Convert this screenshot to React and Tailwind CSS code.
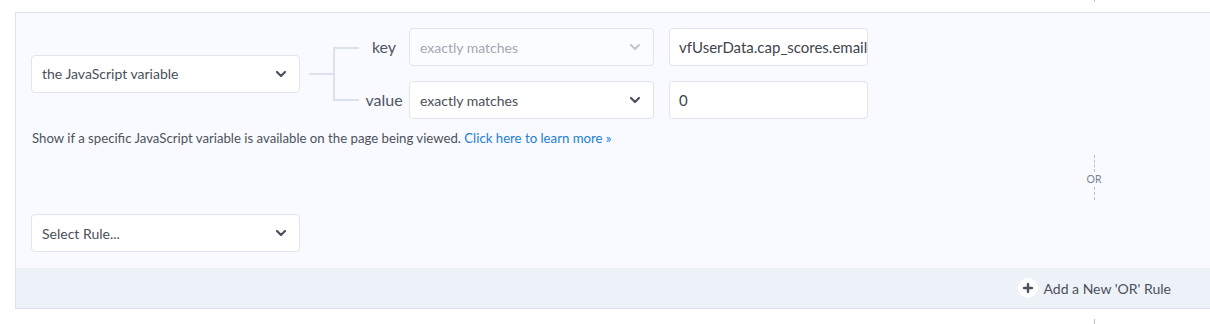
import React from 'react';

const FONT = { fontFamily: 'Lato, "Open Sans", sans-serif' };

function Chevron({ muted }) {
  return (
    <svg width="12" height="8" viewBox="0 0 12 8" className="shrink-0">
      <path
        d="M2 2 L6 6 L10 2"
        fill="none"
        stroke={muted ? '#c4c8d0' : '#4b505a'}
        strokeWidth="2.2"
        strokeLinecap="round"
        strokeLinejoin="round"
      />
    </svg>
  );
}

function Select({ label, width, muted }) {
  return (
    <div
      className={`flex items-center justify-between h-[38px] pl-[10px] pr-[12px] rounded-[4px] border border-[#dfe4ee] text-[14px] ${
        muted ? 'bg-[#fbfcfe] text-[#a3a8b1]' : 'bg-white text-[#4b505a]'
      } ${width}`}
    >
      <span>{label}</span>
      <Chevron muted={muted} />
    </div>
  );
}

function Input({ value }) {
  return (
    <div className="flex items-center h-[38px] w-[199px] px-[9px] rounded-[4px] border border-[#dfe4ee] bg-white text-[15px] text-[#3f444d]">
      {value}
    </div>
  );
}

function Connector() {
  // branches from the first select out to the key / value rows
  return (
    <svg width="59" height="90" viewBox="0 0 59 90" className="shrink-0">
      <g stroke="#dbe2ee" strokeWidth="2" fill="none">
        <path d="M9 45 H34" />
        <path d="M34 18 V72" />
        <path d="M34 19 H59" />
        <path d="M34 71 H59" />
      </g>
    </svg>
  );
}

export default function App() {
  return (
    <div className="w-[1210px] h-[324px] overflow-hidden bg-white" style={FONT}>
      {/* tail of the connector from the block above */}
      <div className="h-[12px] flex">
        <div className="ml-[1094px] w-0 h-[2px] border-l border-dashed border-[#b9bfca]" />
      </div>

      <div className="ml-[15px] border-l border-t border-b border-[#dde3ee] bg-[#f8faff]">
        <div className="px-[15px] pt-[15px] pb-[16px]">
          <div className="flex items-center">
            <Select label="the JavaScript variable" width="w-[269px]" />
            <Connector />
            <div className="flex flex-col gap-[15px]">
              <div className="flex items-center">
                <span className="w-[50px] text-center text-[16px] text-[#50555f]">key</span>
                <Select label="exactly matches" width="w-[245px]" muted />
                <div className="ml-[15px]">
                  <Input value="vfUserData.cap_scores.email" />
                </div>
              </div>
              <div className="flex items-center">
                <span className="w-[50px] text-center text-[16px] text-[#50555f]">value</span>
                <Select label="exactly matches" width="w-[245px]" />
                <div className="ml-[15px]">
                  <Input value="0" />
                </div>
              </div>
            </div>
          </div>

          <p className="mt-[11px] ml-[1px] text-[13.2px] leading-[16px] text-[#4d525b]">
            Show if a specific JavaScript variable is available on the page being viewed.{' '}
            <a className="text-[#1d7fd3]">Click here to learn more »</a>
          </p>

          <div className="mt-[9px] flex flex-col items-center w-[30px] ml-[1048px]">
            <div className="h-[17px] w-0 border-l border-dashed border-[#b9bfca]" />
            <span className="h-[14px] leading-[14px] text-[10.5px] text-[#7b818c]">OR</span>
            <div className="mt-[1px] h-[13px] w-0 border-l border-dashed border-[#b9bfca]" />
          </div>

          <div className="mt-[14px]">
            <Select label="Select Rule..." width="w-[269px]" />
          </div>
        </div>

        <div className="h-[40px] bg-[#edf1f8] flex items-center justify-end pr-[39px]">
          <button className="flex items-center gap-[6px] text-[14px] text-[#4b505a]">
            <span className="w-[20px] h-[20px] rounded-full bg-white flex items-center justify-center">
              <svg width="10" height="10" viewBox="0 0 10 10">
                <path d="M5 1 V9 M1 5 H9" stroke="#4b505a" strokeWidth="2.4" strokeLinecap="round" />
              </svg>
            </span>
            Add a New 'OR' Rule
          </button>
        </div>
      </div>

      <div className="h-[16px] flex">
        <div className="ml-[1094px] mt-[10px] w-0 h-[6px] border-l border-dashed border-[#b9bfca]" />
      </div>
    </div>
  );
}
